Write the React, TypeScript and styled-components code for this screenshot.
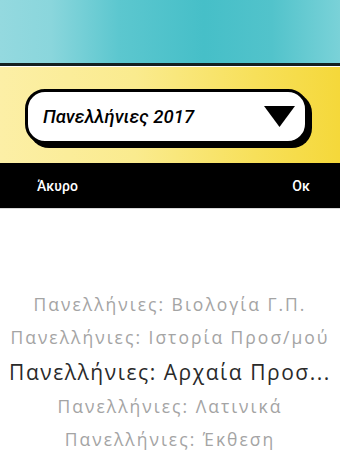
import styled, { createGlobalStyle } from "styled-components";

const GlobalStyle = createGlobalStyle`
  html, body {
    margin: 0;
    padding: 0;
    background: #ffffff;
  }
  body {
    font-family: Roboto, "Noto Sans", sans-serif;
  }
`;

const Screen = styled.div`
  width: 340px;
  height: 460px;
  overflow: hidden;
  display: flex;
  flex-direction: column;
  background: #ffffff;
`;

const Banner = styled.div`
  height: 63px;
  background: linear-gradient(
    90deg,
    #94d9df 0%,
    #8ad6dc 15%,
    #5cc7cf 35%,
    #46bfc8 60%,
    #52c3cb 80%,
    #7ad2d8 100%
  );
  border-bottom: 3px solid #142020;
  box-shadow: 0 1px 0 #ffffff;
`;

const PickerArea = styled.div`
  margin-top: 1px;
  height: 96px;
  display: flex;
  align-items: flex-start;
  padding: 22px 32px 0 25px;
  box-sizing: border-box;
  background: linear-gradient(90deg, #fcefa6 0%, #faeb8e 40%, #f7e05a 75%, #f5d83a 100%);
`;

const Dropdown = styled.div`
  flex: 1;
  height: 55px;
  box-sizing: border-box;
  display: flex;
  align-items: center;
  justify-content: space-between;
  padding: 0 10px 0 15px;
  background: #ffffff;
  border: 3px solid #000000;
  border-radius: 20px;
  box-shadow: 4px 4px 0 #000000;
`;

const DropdownLabel = styled.span`
  font-family: Roboto, "Noto Sans", sans-serif;
  font-style: italic;
  font-weight: 500;
  font-size: 18.5px;
  color: #000000;
`;

const Caret = styled.svg`
  width: 31px;
  height: 21px;
`;

const ActionBar = styled.div`
  height: 45px;
  background: #000000;
  display: flex;
  align-items: center;
  justify-content: space-between;
  padding: 0 30px 0 37px;
  border-bottom: 1px solid #d8d8d8;
`;

const ActionButton = styled.span`
  font-family: Roboto, "Noto Sans", sans-serif;
  font-size: 14px;
  font-weight: 500;
  color: #ffffff;
`;

const Wheel = styled.div`
  flex: 1;
  display: flex;
  flex-direction: column;
  align-items: center;
  padding-top: 79px;
`;

const WheelItem = styled.div<{ $selected?: boolean }>`
  font-family: "Open Sans", Roboto, sans-serif;
  white-space: nowrap;
  letter-spacing: ${(p) => (p.$selected ? "1.55px" : "2px")};
  line-height: ${(p) => (p.$selected ? "36px" : "33px")};
  font-size: ${(p) => (p.$selected ? "21px" : "17.5px")};
  color: ${(p) => (p.$selected ? "#2a2a2a" : "#a4a4a4")};
`;

const items = [
  "Πανελλήνιες: Βιολογία Γ.Π.",
  "Πανελλήνιες: Ιστορία Προσ/μού",
  "Πανελλήνιες: Αρχαία Προσ...",
  "Πανελλήνιες: Λατινικά",
  "Πανελλήνιες: Έκθεση",
];

export default function App() {
  return (
    <>
      <GlobalStyle />
      <Screen>
        <Banner />
        <PickerArea>
          <Dropdown>
            <DropdownLabel>Πανελλήνιες 2017</DropdownLabel>
            <Caret viewBox="0 0 31 21">
              <polygon points="0,0 31,0 15.5,21" fill="#000000" />
            </Caret>
          </Dropdown>
        </PickerArea>
        <ActionBar>
          <ActionButton>Άκυρο</ActionButton>
          <ActionButton>Οκ</ActionButton>
        </ActionBar>
        <Wheel>
          {items.map((t, i) => (
            <WheelItem key={t} $selected={i === 2}>
              {t}
            </WheelItem>
          ))}
        </Wheel>
      </Screen>
    </>
  );
}
